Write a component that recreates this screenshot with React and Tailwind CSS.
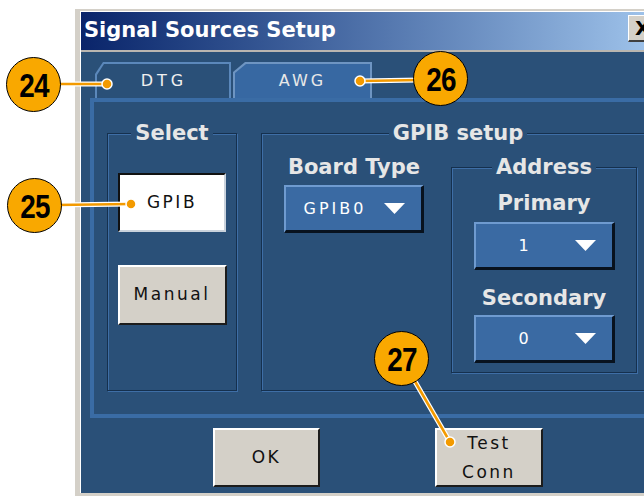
import React from 'react';

const sans = "font-['DejaVu_Sans',sans-serif]";

function Arrow() {
  return (
    <svg width="21" height="11" viewBox="0 0 21 11" className="shrink-0">
      <polygon points="0,0 21,0 10.5,11" fill="#ffffff" />
    </svg>
  );
}

function Dropdown({ value, width }) {
  return (
    <div
      className={`flex h-[48px] ${width} items-center border-t-2 border-l-2 border-t-[#6f9bd0] border-l-[#6f9bd0] border-b-[3px] border-r-[3px] border-b-[#08121e] border-r-[#08121e] bg-[#3a6aa3] pr-[16px]`}
    >
      <span className={`flex-1 text-center text-[16px] tracking-[3px] text-white ${sans}`}>{value}</span>
      <Arrow />
    </div>
  );
}

function GroupBox({ label, className, children }) {
  return (
    <fieldset
      className={`border border-[#15304e] shadow-[1px_1px_0_#3e6ea6,inset_1px_1px_0_#3e6ea6] ${className}`}
    >
      <legend className={`mx-auto bg-[#2a5078] px-[4px] text-[21px] leading-[22px] font-bold text-[#e6e6e6] ${sans}`}>
        {label}
      </legend>
      {children}
    </fieldset>
  );
}

function GrayButton({ className, children }) {
  return (
    <div
      className={`flex flex-col items-center justify-center border-t-2 border-l-2 border-t-white border-l-white border-b-2 border-r-2 border-b-[#1c1c1c] border-r-[#1c1c1c] bg-[#d4d0c8] text-[17px] tracking-[2.5px] text-[#111] ${sans} ${className}`}
    >
      {children}
    </div>
  );
}

function Callout({ n, className }) {
  return (
    <div
      className={`absolute flex h-[55px] w-[55px] items-center justify-center rounded-full border-[1.5px] border-black bg-[#f9a800] ${className}`}
    >
      <span className="block scale-x-[0.82] font-['Liberation_Sans',sans-serif] text-[34px] leading-none font-bold tracking-[-1px] text-black">
        {n}
      </span>
    </div>
  );
}

export default function App() {
  return (
    <div className="relative h-[498px] w-[644px] overflow-hidden bg-white">
      <div className="pt-[9px] pl-[75px]">
        <div className="w-[600px] bg-[#d4d0c8] pt-[2px] pb-[3px] pl-[5px]">
          <div className="border-t border-l border-white">
            {/* title bar */}
            <div className="flex h-[38px] items-center bg-linear-to-r from-[#0a246a] to-[#a6caf0] pl-[3px]">
              <span className={`text-[21px] font-bold text-white ${sans}`}>Signal Sources Setup</span>
              <div className="mt-[-5px] ml-auto mr-[25px] flex h-[27px] w-[22px] items-center border-t border-l border-white border-b-2 border-r-2 border-b-[#404040] border-r-[#404040] bg-[#d4d0c8] pl-[6px] text-[20px] font-bold text-black">
                <span className={sans}>X</span>
              </div>
            </div>
            <div className="h-[2px] bg-[#b9b6b0]" />

            {/* body */}
            <div className="h-[441px] bg-[#2a5078] pt-[10px]">
              <div className="flex h-[36px] gap-[2px] pl-[14px]">
                <div className="h-[36px] w-[136px] bg-[#5b88bb] px-[2px] pt-[2px] [clip-path:polygon(8px_0,100%_0,100%_100%,0_100%,0_12px)]">
                  <div className={`flex h-full items-center justify-center bg-[#2a5078] pl-[2px] text-[16px] tracking-[4px] text-[#f0f0f0] ${sans} [clip-path:polygon(7px_0,100%_0,100%_100%,0_100%,0_11px)]`}>
                    DTG
                  </div>
                </div>
                <div className="h-[36px] w-[139px] bg-[#6e95c2] px-[2px] pt-[2px] [clip-path:polygon(12px_0,100%_0,100%_100%,0_100%,0_10px)]">
                  <div className={`flex h-full items-center justify-center bg-[#3768a2] text-[16px] tracking-[3px] text-[#e8e8e8] ${sans} [clip-path:polygon(11px_0,100%_0,100%_100%,0_100%,0_9px)]`}>
                    AWG
                  </div>
                </div>
              </div>

              {/* tab panel */}
              <div className="ml-[9px] flex h-[320px] border-[4px] border-[#3a6ca5] pt-[20px] pl-[13px]">
                <GroupBox label="Select" className="h-[269px] w-[130px] shrink-0">
                  <div className="flex flex-col items-center pt-[29px]">
                    <div className={`flex h-[59px] w-[108px] items-center justify-center border-t-2 border-l-2 border-t-[#111] border-l-[#111] border-b-2 border-r-2 border-b-[#c9d2dc] border-r-[#c9d2dc] bg-white text-[17px] tracking-[2.5px] text-[#111] ${sans}`}>
                      GPIB
                    </div>
                    <GrayButton className="mt-[33px] h-[60px] w-[109px]">Manual</GrayButton>
                  </div>
                </GroupBox>

                <GroupBox label="GPIB setup" className="ml-[24px] h-[269px] w-[394px] shrink-0">
                  <div className="flex items-start pt-[12px] pl-[22px]">
                    <div className="flex w-[140px] flex-col items-center">
                      <span className={`text-[21px] leading-[22px] font-bold text-[#e6e6e6] ${sans}`}>Board Type</span>
                      <div className="mt-[7px]">
                        <Dropdown value="GPIB0" width="w-[140px]" />
                      </div>
                    </div>

                    <GroupBox label="Address" className="ml-[27px] h-[217px] w-[186px] shrink-0">
                      <div className="flex flex-col items-center pt-[14px]">
                        <span className={`text-[21px] leading-[22px] font-bold text-[#e6e6e6] ${sans}`}>Primary</span>
                        <div className="mt-[8px]">
                          <Dropdown value="1" width="w-[141px]" />
                        </div>
                        <span className={`mt-[17px] text-[21px] leading-[22px] font-bold text-[#e6e6e6] ${sans}`}>Secondary</span>
                        <div className="mt-[6px]">
                          <Dropdown value="0" width="w-[141px]" />
                        </div>
                      </div>
                    </GroupBox>
                  </div>
                </GroupBox>
              </div>

              {/* buttons */}
              <div className="mt-[10px] flex pl-[132px]">
                <GrayButton className="h-[59px] w-[107px]">OK</GrayButton>
                <GrayButton className="ml-[115px] h-[59px] w-[108px] leading-[29px]">
                  <span>Test</span>
                  <span>Conn</span>
                </GrayButton>
              </div>
            </div>
          </div>
        </div>
      </div>

      {/* callout leaders */}
      <svg className="pointer-events-none absolute inset-0" width="644" height="498">
        <g stroke="#ffffff" strokeWidth="5" strokeLinecap="round">
          <line x1="55" y1="84" x2="107" y2="84" />
          <line x1="55" y1="205" x2="131" y2="204" />
          <line x1="360" y1="81" x2="420" y2="80" />
          <line x1="413" y1="378" x2="450" y2="442" />
        </g>
        <g stroke="#f39a00" strokeWidth="2.5" strokeLinecap="round">
          <line x1="55" y1="84" x2="107" y2="84" />
          <line x1="55" y1="205" x2="131" y2="204" />
          <line x1="360" y1="81" x2="420" y2="80" />
          <line x1="413" y1="378" x2="450" y2="442" />
        </g>
        <g fill="#f39a00" stroke="#ffffff" strokeWidth="1.5">
          <circle cx="107" cy="84" r="5" />
          <circle cx="131" cy="204" r="5" />
          <circle cx="360" cy="81" r="5" />
          <circle cx="450" cy="442" r="5" />
        </g>
      </svg>

      <Callout n="24" className="top-[57px] left-[6px]" />
      <Callout n="25" className="top-[178px] left-[7px]" />
      <Callout n="26" className="top-[51px] left-[413px]" />
      <Callout n="27" className="top-[331px] left-[374px]" />
    </div>
  );
}
